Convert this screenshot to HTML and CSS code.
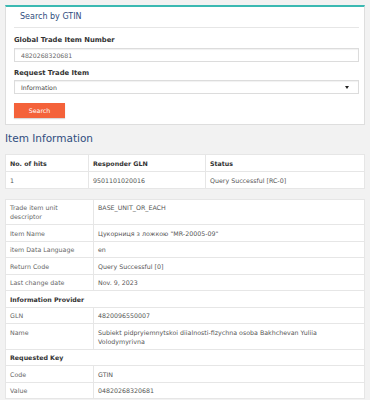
FILE: index.html
```html
<!DOCTYPE html>
<html lang="en">
<head>
    <meta charset="UTF-8">
    <meta name="viewport" content="width=device-width, initial-scale=1.0">
    <title>Search by GTIN</title>
    <link rel="stylesheet" href="styles.css">
</head>
<body>
    <div class="search-card">
        <div class="search-title">Search by GTIN</div>
        <form class="search-form">
            <label class="field-label" for="gtin">Global Trade Item Number</label>
            <input type="text" id="gtin" class="field-input" value="4820268320681">
            <label class="field-label second" for="requestType">Request Trade Item</label>
            <div class="field-select" id="requestType">
                <span>Information</span>
                <span class="select-arrow"></span>
            </div>
            <button type="button" class="search-btn">Search</button>
        </form>
    </div>

    <h2 class="section-title">Item Information</h2>

    <table class="info-table hits-table">
        <tr>
            <th class="col-hits">No. of hits</th>
            <th class="col-gln">Responder GLN</th>
            <th>Status</th>
        </tr>
        <tr>
            <td>1</td>
            <td>9501101020016</td>
            <td>Query Successful [RC-0]</td>
        </tr>
    </table>

    <table class="info-table detail-table">
        <tr>
            <td class="key">Trade item unit<br>descriptor</td>
            <td>BASE_UNIT_OR_EACH</td>
        </tr>
        <tr>
            <td class="key">Item Name</td>
            <td>Цукорниця з ложкою "MR-20005-09"</td>
        </tr>
        <tr>
            <td class="key">item Data Language</td>
            <td>en</td>
        </tr>
        <tr>
            <td class="key">Return Code</td>
            <td>Query Successful [0]</td>
        </tr>
        <tr>
            <td class="key">Last change date</td>
            <td>Nov. 9, 2023</td>
        </tr>
        <tr>
            <th colspan="2">Information Provider</th>
        </tr>
        <tr>
            <td class="key">GLN</td>
            <td>4820096550007</td>
        </tr>
        <tr>
            <td class="key">Name</td>
            <td>Subiekt pidpryiemnytskoi diialnosti-fizychna osoba Bakhchevan Yuliia Volodymyrivna</td>
        </tr>
        <tr>
            <th colspan="2">Requested Key</th>
        </tr>
        <tr>
            <td class="key">Code</td>
            <td>GTIN</td>
        </tr>
        <tr>
            <td class="key">Value</td>
            <td>04820268320681</td>
        </tr>
    </table>
</body>
</html>
```

FILE: styles.css
```css
body {
    font-family: 'DejaVu Sans', Verdana, sans-serif;
    background-color: #f2f2f2;
    margin: 0;
    padding: 5px 5px 0;
    color: #555;
}

.search-card {
    background-color: #ffffff;
    border: 1px solid #dedede;
    border-top: 2px solid #3bb9b2;
    padding: 0 5px 6px 8px;
}

.search-title {
    height: 20px;
    line-height: 20px;
    padding-left: 6px;
    font-size: 8px;
    color: #2f4d7e;
    border-bottom: 1px solid #e6e6e6;
}

.search-form {
    display: flex;
    flex-direction: column;
    align-items: flex-start;
}

.field-label {
    margin-top: 7px;
    line-height: 10px;
    font-size: 6.8px;
    font-weight: bold;
    color: #333;
}

.field-label.second {
    margin-top: 6px;
}

.field-input,
.field-select {
    box-sizing: border-box;
    width: 100%;
    height: 14px;
    margin: 2px 0 0;
    padding: 0 6px;
    border: 1px solid #dcdcdc;
    box-shadow: inset 0 1px 1px rgba(0, 0, 0, 0.06);
    font-family: inherit;
    font-size: 6.2px;
    color: #666;
    outline: none;
}

.field-input {
    margin-top: 3px;
}

.field-select {
    display: flex;
    justify-content: space-between;
    align-items: center;
    color: #444;
}

.select-arrow {
    width: 0;
    height: 0;
    margin-right: 3px;
    border-style: solid;
    border-width: 3px 2.5px 0 2.5px;
    border-color: #222 transparent transparent transparent;
}

.search-btn {
    margin-top: 9px;
    width: 51px;
    height: 15px;
    padding: 0;
    border: none;
    background-color: #f4623a;
    box-shadow: 0 1px 1px rgba(0, 0, 0, 0.15);
    color: #fff;
    font-family: inherit;
    font-size: 6.3px;
    cursor: pointer;
}

.section-title {
    margin: 5px 0 8px;
    line-height: 16px;
    font-size: 10.5px;
    font-weight: normal;
    color: #2f4d7e;
}

.info-table {
    width: 100%;
    border-collapse: collapse;
    background-color: #ffffff;
    border: 1px solid #dcdcdc;
    font-size: 6.3px;
}

.info-table th,
.info-table td {
    border: 1px solid #e6e6e6;
    padding: 3.5px 4px 3px;
    line-height: 9px;
    text-align: left;
    vertical-align: top;
}

.info-table th {
    font-weight: bold;
    color: #333;
}

.hits-table th {
    padding-top: 4px;
}

.hits-table .col-hits {
    width: 74px;
}

.hits-table .col-gln {
    width: 108px;
}

.detail-table {
    margin-top: 10px;
}

.detail-table .key {
    width: 79px;
    color: #666;
}
```
